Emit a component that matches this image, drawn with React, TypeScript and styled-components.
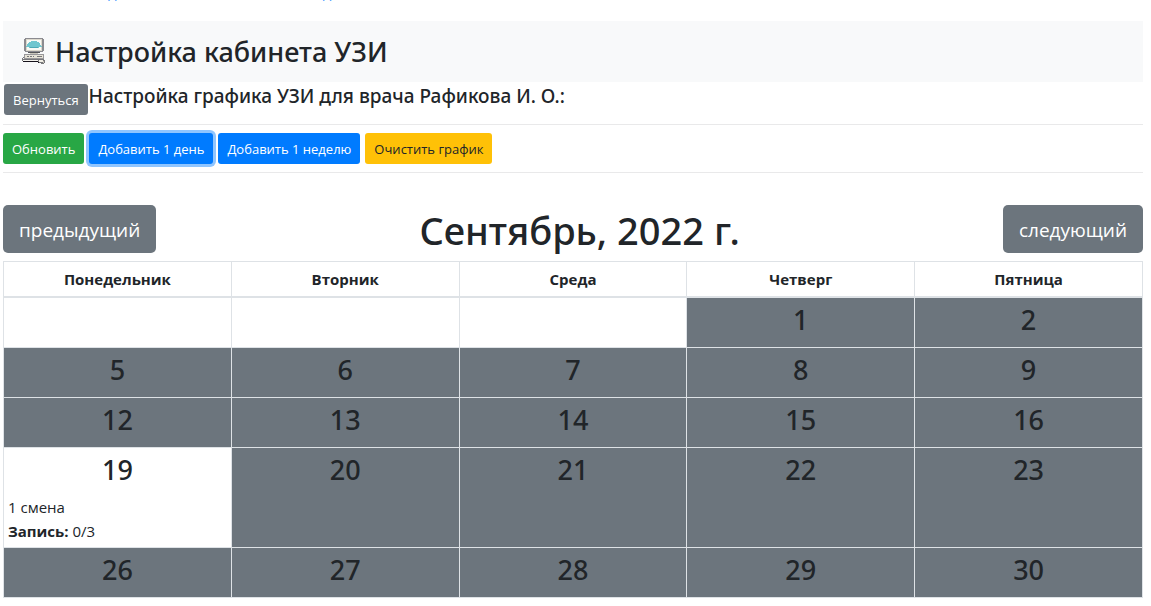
import React from "react";
import styled, { createGlobalStyle } from "styled-components";

const Global = createGlobalStyle`
  *, *::before, *::after { box-sizing: border-box; }
  body {
    margin: 0;
    background: #fff;
    color: #212529;
    font: 400 15px/24px "Open Sans", "Noto Sans", sans-serif;
  }
  button { font-family: inherit; cursor: pointer; }
`;

const Page = styled.div`
  padding: 0 8px 0 3px;
`;

const TopNav = styled.nav`
  display: flex;
  align-items: flex-end;
  gap: 206px;
  height: 21px;
  padding: 0 0 17px 105px;
  overflow: hidden;
`;

const NavLink = styled.a`
  color: #007bff;
  line-height: 24px;
  text-decoration: none;
`;

const TitleBar = styled.header`
  display: flex;
  align-items: center;
  gap: 8px;
  height: 61px;
  padding: 0 18px;
  background: #f8f9fa;
`;

const Title = styled.h1`
  margin: 0;
  font-family: "Noto Sans", sans-serif;
  font-size: 27px;
  font-weight: 500;
  line-height: 34px;
`;

const DoctorRow = styled.div`
  display: flex;
  gap: 1px;
  padding: 2px 0 9px 1px;
`;

const Subtitle = styled.h2`
  margin: 0;
  font-family: "Noto Sans", sans-serif;
  font-size: 19px;
  font-weight: 500;
  line-height: 24px;
`;

const Toolbar = styled.div`
  display: flex;
  gap: 5px;
  padding: 8px 0;
  border: solid #e9e9ea;
  border-width: 1px 0;
`;

const tones = {
  gray: ["#6c757d", "#fff"],
  green: ["#28a745", "#fff"],
  blue: ["#007bff", "#fff"],
  yellow: ["#ffc107", "#212529"],
};

const SmallButton = styled.button<{ $tone: keyof typeof tones; $focused?: boolean }>`
  height: 31px;
  padding: 2px 9px 0;
  border: 0;
  border-radius: 3px;
  background: ${(p) => tones[p.$tone][0]};
  color: ${(p) => tones[p.$tone][1]};
  font-size: 13px;
  line-height: 21px;
  white-space: nowrap;
  box-shadow: ${(p) => (p.$focused ? "0 0 0 3px #8fc5ff" : "none")};
`;

const MonthBar = styled.div`
  display: flex;
  align-items: center;
  justify-content: space-between;
  padding: 32px 0 8px;
`;

const LargeButton = styled.button`
  height: 48px;
  padding: 2px 16px 0;
  border: 0;
  border-radius: 5px;
  background: #6c757d;
  color: #fff;
  font-size: 19px;
  line-height: 30px;
`;

const Month = styled.h2`
  margin: 0;
  padding-top: 2px;
  font-family: "Noto Sans", sans-serif;
  font-size: 38px;
  font-weight: 500;
  line-height: 46px;
`;

const Calendar = styled.table`
  width: 100%;
  border-collapse: collapse;
  table-layout: fixed;
`;

const DayName = styled.th`
  padding: 5px;
  border: 1px solid #dee2e6;
  border-bottom-width: 2px;
  font-size: 15px;
  font-weight: 700;
`;

const Cell = styled.td<{ $closed: boolean }>`
  height: 50px;
  padding: 5px 4px 4px;
  border: 1px solid #dee2e6;
  background: ${(p) => (p.$closed ? "#6c757d" : "#fff")};
  vertical-align: top;
`;

const DayNumber = styled.h3`
  margin: 0;
  font-family: "Noto Sans", sans-serif;
  font-size: 27px;
  font-weight: 500;
  line-height: 34px;
  text-align: center;
`;

const Shift = styled.div`
  padding-top: 8px;
`;

function ComputerIcon() {
  return (
    <svg width="26" height="30" viewBox="0 0 26 30" shapeRendering="crispEdges" aria-hidden="true">
      <path d="M4 1h18v1h1v12h-1v1H4v-1H3V2h1z" fill="#8b8b90" />
      <path d="M5 2h16v12H5z" fill="#dcd9cd" />
      <path d="M6 3h14v10H6z" fill="#fafaf6" />
      <path d="M10 4h6v1h2v1h1v2h1v1h1v1h-3v1H8v-1H5V9h1V7h1V6h1V5h2z" fill="#70c6cf" />
      <path d="M9 10h8v1H9z" fill="#4fa9b5" />
      <path d="M7 15h12v1H7z" fill="#55565a" />
      <path d="M9 16h8v1H9z" fill="#c8c5ba" />
      <path d="M3 17h20v5H3z" fill="#98979a" />
      <path d="M4 18h18v3H4z" fill="#e6e3d7" />
      <path d="M6 19h2v1H6zM9 19h2v1H9zM12 19h1v1h-1zM16 19h5v1h-5z" fill="#77777a" />
      <path d="M2 20h1v1H2zM1 21h1v3H1zM2 22h19v1H2z" fill="#77777a" />
      <path d="M2 23h17v1H2z" fill="#f5f4ee" />
      <path d="M2 24h15v1H2zM17 25h4v1h-4z" fill="#17131c" />
      <path d="M18 22h5v1h1v3h-1v1h-3v-1h-2v-1h-1v-2h1z" fill="#77777a" />
      <path d="M18 23h4v2h-4z" fill="#efede4" />
      <path d="M22 24h1v2h-1z" fill="#c8c5ba" />
    </svg>
  );
}

const dayNames = ["Понедельник", "Вторник", "Среда", "Четверг", "Пятница"];
const weeks = [
  [0, 0, 0, 1, 2],
  [5, 6, 7, 8, 9],
  [12, 13, 14, 15, 16],
  [19, 20, 21, 22, 23],
  [26, 27, 28, 29, 30],
];
const openDay = 19;

export default function App() {
  return (
    <>
      <Global />
      <Page>
        <TopNav>
          <NavLink href="#">д</NavLink>
          <NavLink href="#">д</NavLink>
        </TopNav>
        <TitleBar>
          <ComputerIcon />
          <Title>Настройка кабинета УЗИ</Title>
        </TitleBar>
        <DoctorRow>
          <SmallButton $tone="gray">Вернуться</SmallButton>
          <Subtitle>Настройка графика УЗИ для врача Рафикова И. О.:</Subtitle>
        </DoctorRow>
        <Toolbar>
          <SmallButton $tone="green">Обновить</SmallButton>
          <SmallButton $tone="blue" $focused>Добавить 1 день</SmallButton>
          <SmallButton $tone="blue">Добавить 1 неделю</SmallButton>
          <SmallButton $tone="yellow">Очистить график</SmallButton>
        </Toolbar>
        <MonthBar>
          <LargeButton>предыдущий</LargeButton>
          <Month>Сентябрь, 2022 г.</Month>
          <LargeButton>следующий</LargeButton>
        </MonthBar>
        <Calendar>
          <thead>
            <tr>
              {dayNames.map((name) => (
                <DayName key={name} scope="col">{name}</DayName>
              ))}
            </tr>
          </thead>
          <tbody>
            {weeks.map((week, row) => (
              <tr key={row}>
                {week.map((day, col) => (
                  <Cell key={col} $closed={day > 0 && day !== openDay}>
                    {day > 0 && <DayNumber>{day}</DayNumber>}
                    {day === openDay && (
                      <Shift>
                        1 смена
                        <br />
                        <b>Запись:</b> 0/3
                      </Shift>
                    )}
                  </Cell>
                ))}
              </tr>
            ))}
          </tbody>
        </Calendar>
      </Page>
    </>
  );
}
